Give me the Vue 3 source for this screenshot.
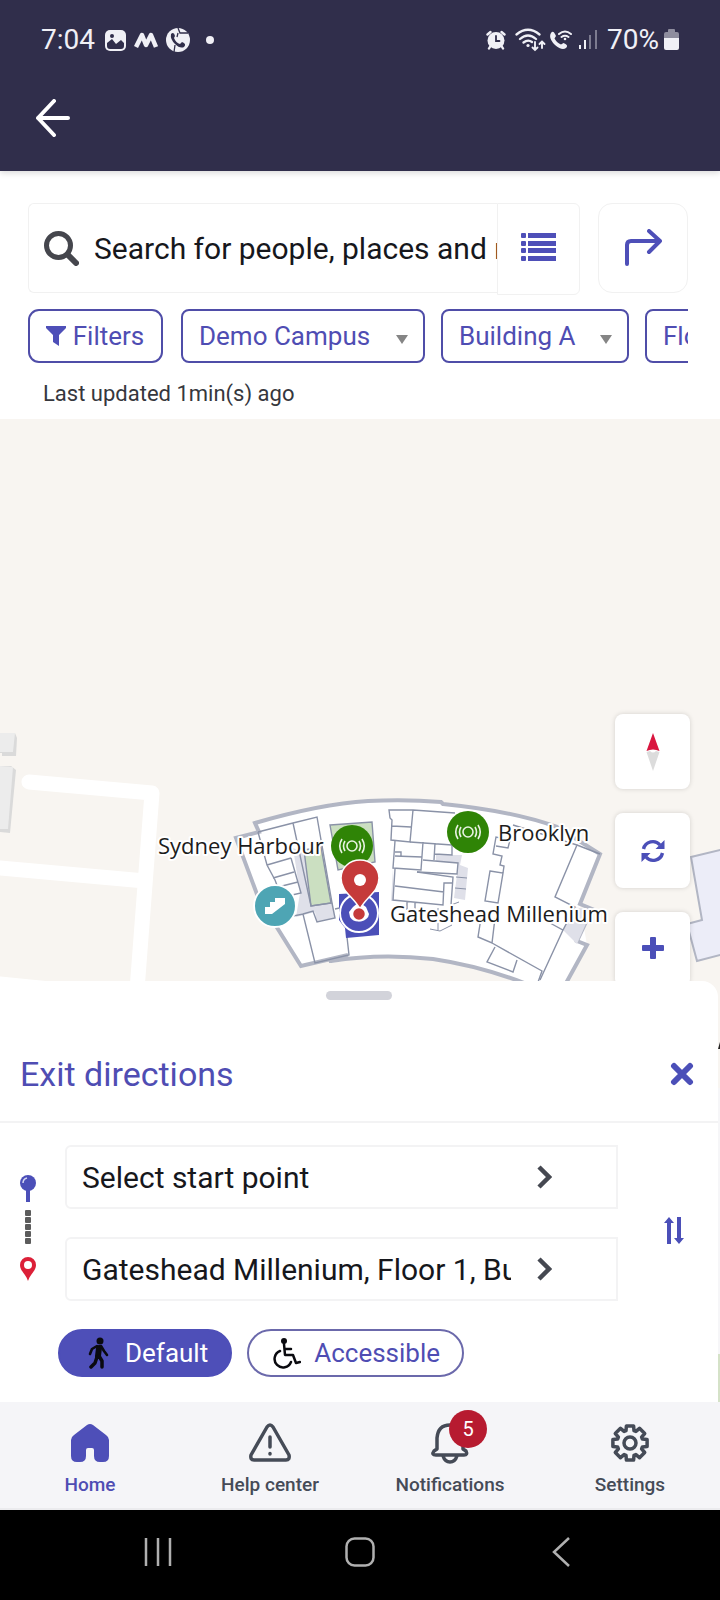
<template>
  <div class="app">
    <header class="top">
      <div class="status">
        <div class="status-side">
          <span class="time">7:04</span>
          <svg class="photo" width="21" height="21" viewBox="0 0 21 21">
            <rect width="21" height="21" rx="5" fill="#f0f0f6" />
            <path d="M2 13 L7 9 L11 14 L16 10 L19 13 V16 Q19 19 16 19 H5 Q2 19 2 16 Z" fill="#302e4b" />
            <circle cx="7" cy="6" r="2" fill="#302e4b" />
          </svg>
          <svg width="24" height="16" viewBox="0 0 24 16" fill="none" stroke="#f0f0f6" stroke-width="4.500" stroke-linejoin="round">
            <path d="M2 15 L8 3 L12 13 L17 3 L22 15" />
          </svg>
          <svg width="24" height="24" viewBox="0 0 24 24">
            <circle cx="12" cy="12" r="12" fill="#f0f0f6" />
            <path d="M5 6 Q8 3.500 9 8 L8 10 Q10 15 14 16 L16 14 Q21 16 18 19 Q14 21 9 16 Q4 11 5 6 Z" fill="#302e4b" />
            <path d="M12 0 L14 5 H22 M12 5 L11 9 M9 17 L8 24" fill="none" stroke="#302e4b" stroke-width="1.300" />
          </svg>
          <svg class="dot" width="8" height="8" viewBox="0 0 8 8"><circle cx="4" cy="4" r="4" fill="#f0f0f6" /></svg>
        </div>
        <div class="status-side right">
          <svg width="20" height="20" viewBox="0 0 20 20" fill="none" stroke="#f0f0f6" stroke-width="2.400" stroke-linecap="round">
            <circle cx="10" cy="10.500" r="8.500" fill="#f0f0f6" stroke="none" />
            <path d="M1.500 4.500 L4.500 2 M18.500 4.500 L15.500 2 M4.500 16 L3 18.500 M15.500 16 L17 18.500" />
            <path d="M10 6 V11 H13.500" stroke="#302e4b" stroke-width="1.800" />
          </svg>
          <svg class="wifi" width="31" height="24" viewBox="0 0 31 24" fill="none" stroke="#f0f0f6" stroke-width="2.300" stroke-linecap="round">
            <path d="M1.500 6.500 Q13 -3 24.500 6.500 M5 11 Q13 4 21 11 M8.500 14.500 Q13 11 17 14" />
            <circle cx="13" cy="17.500" r="1.600" fill="#f0f0f6" stroke="none" />
            <path d="M20 14 V21.500 M17.500 19.500 L20 22 L22.500 19.500 M27 20 V14 M24.500 16 L27 13.500 L29.500 16" stroke-width="1.900" />
          </svg>
          <svg class="call" width="23" height="20" viewBox="0 0 23 20" fill="none" stroke="#f0f0f6" stroke-linecap="round">
            <path d="M2 3 Q4 0 6 4 L7 6 L5.500 8.500 Q8 13 12 14.500 L14.500 13 Q20 15 17 18 Q13 21 6 15 Q-1 8 2 3 Z" fill="#f0f0f6" stroke="none" />
            <path d="M10 4 Q16 -1 22 4 M12.500 7 Q16 4.500 19.500 7" stroke-width="2" />
            <circle cx="16" cy="9" r="1.300" fill="#f0f0f6" stroke="none" />
          </svg>
          <svg class="signal" width="19" height="20" viewBox="0 0 19 20" fill="#f0f0f6">
            <rect y="15" width="2" height="4" /><rect x="5" y="10" width="2" height="9" />
            <rect x="10" y="5" width="2" height="14" opacity="0.4" /><rect x="16" width="2" height="19" opacity="0.4" />
          </svg>
          <span class="percent">70%</span>
          <svg width="15" height="22" viewBox="0 0 15 22">
            <path d="M4 3 V1 Q4 0 5 0 H10 Q11 0 11 1 V3 H13 Q15 3 15 5 V9 H0 V5 Q0 3 2 3 Z" fill="#8e8d9e" />
            <path d="M0 9 H15 V19 Q15 21 13 21 H2 Q0 21 0 19 Z" fill="#f0f0f6" />
          </svg>
        </div>
      </div>
      <button class="back" type="button" aria-label="Back">
        <svg width="36" height="38" viewBox="0 0 36 38" fill="none" stroke="#fff" stroke-width="4" stroke-linecap="round" stroke-linejoin="round">
          <path d="M19 2 L3 19 L19 36 M3 19 H33" />
        </svg>
      </button>
    </header>

    <section class="search-area">
      <div class="search-row">
        <div class="search-box">
          <label class="search-field">
            <svg width="35" height="35" viewBox="0 0 35 35" fill="none" stroke="#45464d">
              <circle cx="14.500" cy="14.500" r="12" stroke-width="5" />
              <path d="M23.500 23.500 L32 32" stroke-width="6" stroke-linecap="round" />
            </svg>
            <input v-model="query" type="text" placeholder="Search for people, places and more" aria-label="Search" />
          </label>
          <button class="list-btn" type="button" aria-label="List view">
            <svg width="35" height="28" viewBox="0 0 35 28" fill="#4e4fb8">
              <g v-for="y in [0, 8, 15, 23]" :key="y">
                <rect :y="y" width="5" height="5" rx="1" />
                <rect x="7" :y="y" width="28" height="5" />
              </g>
            </svg>
          </button>
        </div>
        <button class="route-btn" type="button" aria-label="Directions">
          <svg width="38" height="38" viewBox="0 0 38 38" fill="none" stroke="#4e4fb8" stroke-width="4" stroke-linecap="round" stroke-linejoin="round">
            <path d="M3 35 V16 Q3 12 7 12 H36 M25 2 L36 12 L25 23" />
          </svg>
        </button>
      </div>
      <div class="filters">
        <button class="filter-btn" type="button">
          <svg width="22" height="22" viewBox="0 0 22 22" fill="#4e4fb8"><path d="M1 1 H21 V3 L14 10 V21 L8 17 V10 L1 3 Z" /></svg>
          Filters
        </button>
        <div v-for="s in selects" :key="s.name" class="select" :class="s.name">
          <select v-model="s.value" :aria-label="s.name">
            <option>{{ s.value }}</option>
          </select>
          <svg width="12" height="9" viewBox="0 0 12 9" fill="#858585"><path d="M0 0 H12 L6 9 Z" /></svg>
        </div>
      </div>
      <p class="updated">Last updated 1min(s) ago</p>
    </section>

    <main class="stage">
      <svg class="map" viewBox="0 419 720 983" preserveAspectRatio="xMidYMin slice">
        <rect y="419" width="720" height="983" fill="#f8f5f1" />

        <!-- roads -->
        <g fill="none" stroke="#fff" stroke-width="15" stroke-linecap="round" stroke-linejoin="round">
          <path d="M29 782 L152 793 L137 990 M0 868 L145 881 M0 984 L60 990" />
        </g>
        <path d="M0 734 L15 733 L17 738 L16 756 L2 756 L2 753 L0 753 Z M0 766 L11 766 L16 770 L10 833 L0 832 Z" fill="#dadada" />
        <path d="M0 733 L15 733 L13 752 L0 752 Z M0 766 L13 767 L8 829 L0 829 Z" fill="#ececec" />

        <path d="M691 857 L724 849 V954 L697 961 L687 924 L702 920 Z" fill="#ecedf8" stroke="#b2b6c4" stroke-width="2" />

        <!-- building -->
        <path
          d="M255 823 Q320 804 368 801 Q406 800 443 803 Q513 811 557 827 L600 854 L580 905 L587 945 L565 985 L527 985 Q480 966 433 959 Q380 954 331 963 L330 959 L301 966 L257 897 L236 838 L259 832 Z"
          fill="#fff" stroke="none"
        />
        <path
          d="M331 963 L331 961 Q380 953 433 959 Q480 966 527 984 M565 985 L587 945 L577 941 L592 909 L580 904 L600 854 L557 827 Q513 811 443 804 L441 802 Q406 799 368 801 Q320 804 255 823 L259 832 L236 838 L258 897 L301 966 L348 955"
          fill="none" stroke="#b2b6c4" stroke-width="4"
        />
        <path d="M293 848 L305 853 L312 906 L332 903 L335 918 L317 922 L315 912 L296 917 L300 893 Z" fill="#dfe0e9" />
        <path d="M436 855 H462 L460 865 L468 868 L465 900 L454 898 L457 875 L458 863 L436 861 Z M393 868 L391 901 L394 901 Z" fill="#dfe0e9" />
        <path d="M563 930 L573 907 L592 910 L577 944 Z" fill="#dfe0e9" />
        <g fill="none" stroke="#8a92a7" stroke-width="1.400">
          <path d="M304 850 L321 847 L331 903 L311 906 Z M330 825 L372 822 L375 862 L338 870 Z" fill="#cbdfc1" />
          <path d="M258 832 L293 823 L317 817 L332 903 L311 906 L293 823 M258 832 L267 865 L275 880 L280 893 M267 865 L291 858 M273 878 L294 872 M278 887 L298 882 M291 858 L301 893 L292 895" />
          <path d="M288 917 L303 914 L315 963 L349 955 L347 937 M303 914 L313 911 L317 922 L335 918 L332 903 M335 909 L344 907" />
          <path d="M455 813 L413 810 H389 L390 818 L392 820 L391 840 L410 842 L413 810 M392 826 L411 827" />
          <path d="M410 842 L452 845 M395 841 L393 868 L421 870 L423 842 M395 856 L422 857 M395 852 H401 V857 M423 860 L458 863 L457 874 L417 872 M435 843 L434 860 M435 854 L452 855 L452 845" />
          <path d="M395 869 L393 900 L443 905 L444 883 H452 M395 886 L444 892 M417 872 L453 877 L451 905 M407 902 V910 M415 903 V911" />
          <path d="M451 905 L459 902 M430 929 L440 931 L452 925 M438 908 L438 930 M456 877 L467 878 M455 888 L466 889" stroke-width="1" />
          <path d="M490 871 L503 873 L498 903 L485 901 Z M503 873 L504 866 L500 865 L502 856 L493 854 L496 837 L510 840 L508 848 L496 846" />
          <path d="M481 918 L478 937 L492 943 L495 918 M492 943 L542 971 L537 985 M495 947 L487 962 L513 972 L517 960" />
          <path d="M513 825 L577 845 L555 897 L575 907 L563 930 L550 923 M563 930 L540 980 M577 845 L600 854" />
        </g>

        <!-- markers -->
        <path d="M339 894 L379 892 V935 L346 938 L345 928 L339 920 Z" fill="#4b4fb8" />
        <circle cx="359" cy="913" r="19" fill="#4b4fb8" stroke="#fff" stroke-width="2" />
        <path d="M349 912 L353 907 L359 902 L366 907 L369 914 A10 8 0 0 1 350 917 Z" fill="#fff" />
        <circle v-for="m in beacons" :key="m.x" :cx="m.x" :cy="m.y" r="21" fill="#2f8406" />
        <g v-for="m in beacons" :key="m.y" :transform="`translate(${m.x} ${m.y})`" fill="none" stroke="#e8f3e2" stroke-width="1.600">
          <circle r="5" />
          <path d="M-7 -5 Q-10 0 -7 5 M7 -5 Q10 0 7 5 M-10 -7 Q-14.500 0 -10 7 M10 -7 Q14.500 0 10 7" />
        </g>
        <path d="M360 909 C354 897 341 892 341 878 A19 18 0 0 1 379 878 C379 892 366 897 360 909 Z" fill="#c53a3a" stroke="#fff" stroke-width="1.500" />
        <circle cx="360" cy="880" r="6" fill="#fff" />
        <circle cx="359" cy="914" r="6.500" fill="#c53a3a" stroke="#fff" stroke-width="1.500" />
        <circle cx="275" cy="906" r="21" fill="#4ea5b4" stroke="#fff" stroke-width="2" />
        <path d="M265 907 H270 V902 H275 V898 H285 V904 L272 914 H265 Z" fill="#fff" />

        <g class="map-labels">
          <text x="158" y="854">Sydney Harbour</text>
          <text x="498" y="841">Brooklyn</text>
          <text x="390" y="922">Gateshead Millenium</text>
        </g>
        <path d="M718 1049 L720 1042 V1049 Z" fill="#222" />
        <path d="M716 1088 H720 V1354 H716 Z" fill="#f6f6f8" />
        <path d="M716 1354 H720 V1402 H716 Z" fill="#d5e2c8" />
      </svg>

      <div class="controls">
        <button type="button" aria-label="Compass">
          <svg width="14" height="38" viewBox="0 0 14 38">
            <path d="M7 0 L13.500 18 Q7 15 0.500 18 Z" fill="#d9163f" />
            <path d="M0.500 19 L4 18 Q7 21 10 18 L13.500 19 L7 38 Z" fill="#dcdcdc" />
          </svg>
        </button>
        <button type="button" aria-label="Refresh">
          <svg width="24" height="24" viewBox="0 0 24 24" fill="none" stroke="#4b4fb8" stroke-width="3.400">
            <path d="M2.500 10 A9.500 9.500 0 0 1 19 6 M21.500 14 A9.500 9.500 0 0 1 5 18" />
            <path d="M23.500 1 V10 H14.500 Z M0.500 23 V14 H9.500 Z" fill="#4b4fb8" stroke="none" />
          </svg>
        </button>
        <button type="button" aria-label="Zoom in">
          <svg width="22" height="22" viewBox="0 0 22 22" fill="#4b4fb8">
            <rect x="8" width="6" height="22" rx="1" /><rect y="8" width="22" height="6" rx="1" />
          </svg>
        </button>
      </div>

      <section class="sheet">
        <div class="handle"></div>
        <div class="sheet-head">
          <h2>Exit directions</h2>
          <button type="button" aria-label="Close">
            <svg width="24" height="24" viewBox="0 0 24 24" fill="none" stroke="#4b4fb8" stroke-width="6" stroke-linecap="round"><path d="M4 4 L20 20 M20 4 L4 20" /></svg>
          </button>
        </div>
        <div class="route">
          <svg class="track" width="16" height="108" viewBox="0 0 16 108">
            <path d="M6 14 H10 V27 H6 Z" fill="#4b4fb8" />
            <circle cx="8" cy="8" r="8" fill="#4b4fb8" />
            <path d="M3 8 Q3 4 7 3" fill="none" stroke="#d5d6f2" stroke-width="1.500" />
            <rect v-for="n in 5" :key="n" x="5" :y="28 + n * 7" width="6" height="6" rx="1" fill="#5c5c5c" />
            <path d="M8 106 C6 99 0 96 0 90 A8 8 0 0 1 16 90 C16 96 10 99 8 106 Z" fill="#dc2038" />
            <circle cx="8" cy="90" r="4" fill="#fff" />
          </svg>
          <div class="points">
            <button v-for="p in points" :key="p" class="point" type="button">
              <span>{{ p }}</span>
              <svg width="16" height="24" viewBox="0 0 16 24" fill="none" stroke="#454851" stroke-width="4.500"><path d="M3 2 L13 12 L3 22" /></svg>
            </button>
          </div>
          <button class="swap" type="button" aria-label="Swap points">
            <svg width="20" height="28" viewBox="0 0 20 28" fill="#4b4fb8">
              <path d="M5 0 L10 6 H7 V27 H3 V6 H0 Z M13 0 H17 V21 H20 L15 27 L10 21 H13 Z" />
            </svg>
          </button>
        </div>
        <div class="modes">
          <button class="mode active" type="button">
            <svg width="28" height="32" viewBox="0 0 28 32" fill="none" stroke="#0a0a0f" stroke-linecap="round" stroke-linejoin="round">
              <circle cx="16" cy="4" r="3.500" fill="#0a0a0f" stroke="none" />
              <path d="M15 11 L14 19" stroke-width="6" />
              <path d="M13 9 L8 12 L6 17 M17 9 L20 14 L23 18" stroke-width="2.600" />
              <path d="M13 20 L11 26 L7 30 M15 19 L18 24 L18 30" stroke-width="3.500" />
            </svg>
            Default
          </button>
          <button class="mode" type="button">
            <svg width="28" height="32" viewBox="0 0 28 32" fill="none" stroke="#0a0a0f" stroke-width="2.500" stroke-linecap="round" stroke-linejoin="round">
              <circle cx="11" cy="4" r="3" fill="#0a0a0f" stroke="none" />
              <path d="M11 7 L12 18 H20 L23 26 L27 25 M12 12 H18" />
              <path d="M7 14 A8.500 8.500 0 1 0 18 25" />
            </svg>
            Accessible
          </button>
        </div>
      </section>
    </main>

    <nav class="tabs">
      <a v-for="t in tabs" :key="t.label" href="#" :class="{ active: t.active }">
        <span class="tab-icon">
          <svg width="42" height="42" viewBox="0 0 42 42" :fill="t.active ? '#4e4fb8' : 'none'" stroke-width="3.500" stroke-linecap="round" stroke-linejoin="round">
            <path :d="t.icon" :stroke="t.active ? 'none' : '#454b57'" />
          </svg>
          <span v-if="t.badge" class="badge">{{ t.badge }}</span>
        </span>
        {{ t.label }}
      </a>
    </nav>

    <footer class="system">
      <button type="button" aria-label="Recents">
        <svg width="30" height="30" viewBox="0 0 30 30" stroke="#b0b0b0" stroke-width="2.500"><path d="M3 1 V29 M15 1 V29 M27 1 V29" /></svg>
      </button>
      <button type="button" aria-label="Home screen">
        <svg width="30" height="30" viewBox="0 0 30 30" fill="none" stroke="#b0b0b0" stroke-width="2.500"><rect x="1.500" y="1.500" width="27" height="27" rx="8" /></svg>
      </button>
      <button type="button" aria-label="System back">
        <svg width="30" height="30" viewBox="0 0 30 30" fill="none" stroke="#b0b0b0" stroke-width="2.500"><path d="M22 1 L7 15 L22 29" /></svg>
      </button>
    </footer>
  </div>
</template>

<script setup>
import { ref } from "vue";

const query = ref("");

const selects = ref([
  { name: "campus", value: "Demo Campus" },
  { name: "building", value: "Building A" },
  { name: "floor", value: "Floor 1" },
]);

const beacons = [
  { x: 352, y: 846 },
  { x: 468, y: 832 },
];

const points = ["Select start point", "Gateshead Millenium, Floor 1, Building A"];

// eight teeth around the centre, plus the hole in the middle
function gearPath() {
  const corners = [
    [-18, 13],
    [-12, 17.5],
    [12, 17.5],
    [18, 13],
  ];
  const pts = [];
  for (let tooth = 0; tooth < 8; tooth++) {
    for (const [deg, r] of corners) {
      const a = ((tooth * 45 + deg) * Math.PI) / 180;
      pts.push(`${(21 + r * Math.cos(a)).toFixed(1)} ${(21 + r * Math.sin(a)).toFixed(1)}`);
    }
  }
  return `M${pts.join(" L")} Z M27 21 A6 6 0 1 1 15 21 A6 6 0 1 1 27 21 Z`;
}

const tabs = [
  {
    label: "Home",
    active: true,
    icon: "M18 3 Q21 1 24 3 L37 13 Q40 15 40 18 V34 Q40 40 34 40 H31 Q25 40 25 34 V28 Q25 26 23 26 H19 Q17 26 17 28 V34 Q17 40 11 40 H8 Q2 40 2 34 V18 Q2 15 5 13 Z",
  },
  {
    label: "Help center",
    icon: "M18 5 Q21 1 24 5 L40 33 Q41 38 37 38 H5 Q1 38 2 33 Z M21 15 V25 M21 31.500 V32",
  },
  {
    label: "Notifications",
    badge: 5,
    icon: "M8 27 V16 Q9 3 21 3 Q33 3 34 16 V27 L37 29 Q39 33 35 33 H7 Q2 33 5 29 Z M14 34 Q16 40 21 40 Q26 40 28 34",
  },
  { label: "Settings", icon: gearPath() },
];
</script>

<style>
body {
  margin: 0;
}
</style>

<style scoped>
.app {
  min-height: 100vh;
  display: flex;
  flex-direction: column;
  background: #fff;
  font-family: Roboto, sans-serif;
  color: #16171c;
}

.app * {
  box-sizing: border-box;
}

svg {
  display: block;
  flex: none;
}

button {
  margin: 0;
  padding: 0;
  border: 0;
  background: none;
  font: inherit;
  color: inherit;
  display: flex;
  align-items: center;
  justify-content: center;
}

.top {
  position: relative;
  height: 171px;
  background: #302e4b;
  box-shadow: 0 2px 6px rgba(0, 0, 0, 0.15);
}

.status {
  display: flex;
  justify-content: space-between;
  padding: 24px 41px 0;
  height: 56px;
  font-size: 28px;
  line-height: 32px;
  color: #f0f0f6;
}

.status-side {
  display: flex;
  align-items: center;
  gap: 8px;
  height: 32px;
}

.time {
  margin-right: 2px;
}

.dot {
  margin-left: 8px;
}

.right {
  gap: 5px;
}

.wifi {
  margin-left: 4px;
}

.call {
  margin-left: -2px;
}

.signal {
  margin-left: 2px;
}

.percent {
  margin-left: 4px;
}

.back {
  margin: 43px 0 0 35px;
}

.search-area {
  padding: 32px 32px 0 28px;
  height: 248px;
}

.search-row {
  display: flex;
  gap: 18px;
  height: 92px;
}

.search-box {
  flex: 1;
  display: flex;
}

.search-field {
  flex: 1;
  display: flex;
  align-items: center;
  gap: 15px;
  height: 90px;
  padding-left: 15px;
  border: 1px solid #f1f1f1;
  border-right: 0;
  border-radius: 6px 0 0 6px;
}

.search-field input {
  flex: 1;
  min-width: 0;
  height: 60px;
  padding: 0;
  border: 0;
  outline: 0;
  background: none;
  font: inherit;
  font-size: 30px;
}

.search-field input::placeholder {
  color: #16171c;
  opacity: 1;
}

.list-btn {
  width: 83px;
  height: 92px;
  padding-bottom: 4px;
  border: 1px solid #f1f1f1;
  border-radius: 0 6px 6px 0;
}

.route-btn {
  width: 90px;
  height: 90px;
  border: 1px solid #f1f1f1;
  border-radius: 14px;
}

.filters {
  display: flex;
  margin-top: 14px;
  overflow: hidden;
  font-size: 26px;
  color: #4f4db3;
}

.filter-btn {
  flex: none;
  gap: 6px;
  width: 135px;
  height: 54px;
  padding-right: 2px;
  border: 2px solid #4f4da8;
  border-radius: 11px;
}

.select {
  flex: none;
  display: flex;
  align-items: center;
  height: 54px;
  margin-left: 16px;
  padding: 0 15px 0 16px;
  border: 2px solid #4f4da8;
  border-radius: 8px;
}

.select select {
  flex: 1;
  min-width: 0;
  height: 48px;
  padding: 0;
  border: 0;
  outline: 0;
  appearance: none;
  background: none;
  font: inherit;
  color: inherit;
}

.select svg {
  margin-top: 6px;
}

.campus {
  width: 244px;
  margin-left: 18px;
}

.building {
  width: 188px;
}

.floor {
  width: 150px;
}

.updated {
  margin: 16px 0 0 15px;
  font-size: 22px;
  line-height: 30px;
  color: #36373d;
}

.stage {
  position: relative;
  flex: 1;
  display: flex;
  flex-direction: column;
  padding-top: 562px;
  overflow: hidden;
}

.map {
  position: absolute;
  inset: 0;
  width: 100%;
  height: 100%;
}

.map-labels {
  font-family: "Open Sans", "Noto Sans", sans-serif;
  font-size: 22px;
  fill: #1c1c1c;
  stroke: #fff;
  stroke-width: 4px;
  stroke-linejoin: round;
  paint-order: stroke;
}

.controls {
  position: absolute;
  top: 295px;
  right: 30px;
  display: flex;
  flex-direction: column;
  gap: 24px;
}

.controls button {
  width: 75px;
  height: 75px;
  border-radius: 8px;
  background: #fff;
  box-shadow: 0 0 5px rgba(0, 0, 0, 0.15);
}

.controls button:last-child {
  padding-bottom: 4px;
}

.sheet {
  position: relative;
  flex: 1;
  margin-right: 2px;
  padding-top: 10px;
  background: #fff;
  border-radius: 0 16px 0 0;
}

.handle {
  width: 66px;
  height: 9px;
  margin: 0 auto;
  border-radius: 5px;
  background: #d2d3da;
}

.sheet-head {
  display: flex;
  align-items: center;
  justify-content: space-between;
  height: 123px;
  padding: 26px 24px 0 20px;
  border-bottom: 2px solid #f3f3f4;
}

h2 {
  margin: 0;
  font-size: 34px;
  font-weight: 400;
  line-height: 40px;
  color: #4f4db3;
}

.route {
  display: flex;
  align-items: center;
  padding: 22px 34px 0 20px;
}

.track {
  margin-top: 12px;
}

.points {
  flex: 1;
  min-width: 0;
  display: flex;
  flex-direction: column;
  gap: 28px;
  margin: 0 46px 0 29px;
}

.point {
  justify-content: space-between;
  height: 64px;
  padding: 0 64px 0 15px;
  border: 2px solid #f3f3f4;
  border-radius: 6px 0 0 6px;
  font-size: 30px;
}

.point span {
  flex: 1;
  min-width: 0;
  overflow: hidden;
  margin-right: 25px;
  text-align: left;
  white-space: nowrap;
}

.swap {
  margin-top: 16px;
}

.modes {
  display: flex;
  gap: 15px;
  padding: 28px 0 25px 58px;
  font-size: 26px;
  color: #4f4db3;
}

.mode {
  gap: 13px;
  height: 48px;
  padding: 0 22px 0 24px;
  border: 2px solid #6b69ab;
  border-radius: 24px;
}

.mode.active {
  border-color: #4e4fb8;
  background: #4e4fb8;
  color: #fff;
}

.tabs {
  display: grid;
  grid-template-columns: repeat(4, 1fr);
  height: 108px;
  padding-top: 20px;
  background: #f5f5f8;
  border-bottom: 2px solid #ebebee;
}

.tabs a {
  display: flex;
  flex-direction: column;
  align-items: center;
  gap: 9px;
  font-size: 19px;
  font-weight: 500;
  line-height: 24px;
  color: #454b57;
  text-decoration: none;
}

.tabs a.active {
  color: #4f4db3;
}

.tab-icon {
  position: relative;
}

.badge {
  position: absolute;
  top: -12px;
  left: 20px;
  width: 38px;
  height: 38px;
  border-radius: 50%;
  background: #b71b30;
  color: #fff;
  font-size: 20px;
  line-height: 38px;
  font-weight: 400;
  text-align: center;
}

.system {
  display: grid;
  grid-template-columns: repeat(3, 202px);
  justify-content: center;
  height: 90px;
  padding-bottom: 6px;
  background: #000;
}
</style>
